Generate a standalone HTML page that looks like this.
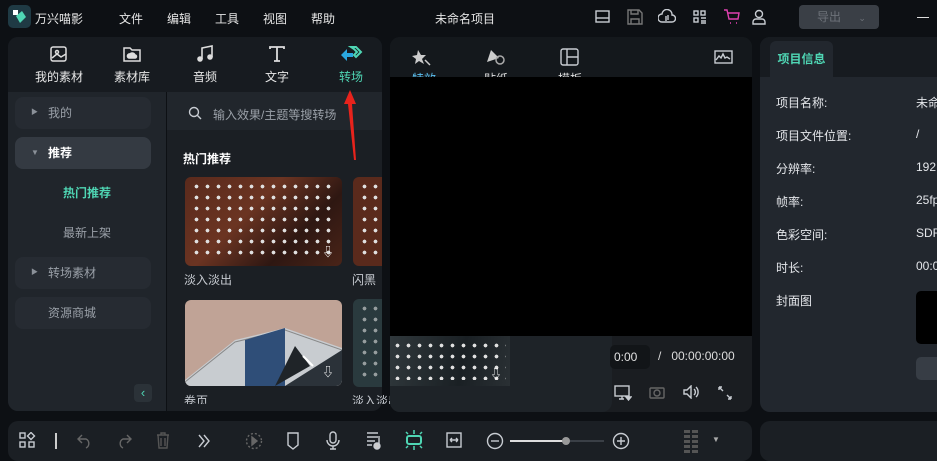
<!DOCTYPE html><html><head><meta charset="utf-8"><style>
*{margin:0;padding:0;box-sizing:border-box}
body{width:937px;height:454px;overflow:hidden;background:#0d1014;font-family:"Liberation Sans","Noto Sans CJK SC",sans-serif;color:#d8dbe0;position:relative;font-size:12px}
.a{position:absolute;white-space:nowrap}
.menu span{position:absolute;top:10px;font-size:12px;color:#e6e6e6}
.tab{position:absolute;top:44px;width:70px;text-align:center;font-size:12px;color:#e8e8e8}
.tab svg{display:block;margin:0 auto 4px}
.side{position:absolute;left:15px;width:136px;height:32px;border-radius:8px;background:#262b32;font-size:12px;color:#9aa0a8;line-height:32px;padding-left:33px}
.tri{position:absolute;left:16px;top:0;font-size:7px;color:#8a9098}
.thumb{position:absolute;border-radius:6px;overflow:hidden}
.dots{position:absolute;inset:4px 8px 10px 6px;background-image:linear-gradient(#d8d8d8,#d8d8d8),linear-gradient(#0000,#0000);background-image:radial-gradient(circle,#e0e0e0 0 1.7px,transparent 2px);background-size:11px 11px;background-position:0 0}
.lbl{position:absolute;font-size:12px;color:#c6cad0;white-space:nowrap}
.info{position:absolute;left:776px;font-size:12px;color:#e4e6ea;white-space:nowrap}
.val{position:absolute;left:916px;font-size:12px;color:#e4e6ea;white-space:nowrap}
.ic{position:absolute;stroke:#c8ccd2;fill:none;stroke-width:1.4}
</style></head><body>
<div class="a" style="left:8px;top:5px;width:23px;height:23px;border-radius:5px;background:#1f3a44"></div>
<svg class="a" style="left:11px;top:8px" width="17" height="17"><path d="M2 2l5 0 0 5-5 0z" fill="#fff"/><path d="M5 8l6-5 4 6-6 6z" fill="#4fd6b4"/></svg>
<div class="menu"><span style="left:35px">万兴喵影</span><span style="left:119px">文件</span><span style="left:167px">编辑</span><span style="left:215px">工具</span><span style="left:263px">视图</span><span style="left:311px">帮助</span><span style="left:435px">未命名项目</span></div>
<svg class="ic" style="left:595px;top:10px" width="16" height="14"><rect x="1" y="1" width="13" height="11"/><path d="M1 8h13"/></svg>
<svg class="ic" style="left:627px;top:9px;stroke:#777" width="16" height="16"><path d="M1 1h11l3 3v11H1z M4 1v4h7V1 M4 15v-5h8v5"/></svg>
<svg class="ic" style="left:658px;top:9px" width="18" height="16"><path d="M4 13a4 4 0 0 1 0-8 5 5 0 0 1 10 1 3.5 3.5 0 0 1 0 7z M8 7v5 M10 6v5"/></svg>
<svg class="ic" style="left:693px;top:10px" width="14" height="14"><rect x="1" y="1" width="4" height="4"/><rect x="8" y="1" width="4" height="4"/><rect x="1" y="8" width="4" height="4"/><path d="M8 8h5M8 11h5M8 13h5"/></svg>
<svg class="ic" style="left:723px;top:9px;stroke:#e040b0" width="18" height="16"><path d="M1 1h3l2 9h9l1-6H5 M7 14h1M13 14h1"/></svg>
<svg class="ic" style="left:752px;top:9px" width="14" height="16"><circle cx="7" cy="5" r="3.5"/><path d="M1 15v-2a3 3 0 0 1 3-3h6a3 3 0 0 1 3 3v2z"/></svg>
<div class="a" style="left:799px;top:5px;width:80px;height:24px;border-radius:4px;background:#3a3f46;color:#6d7279;font-size:12px;line-height:24px;padding-left:18px">导出 <span style="margin-left:14px;font-size:9px">⌄</span></div>
<div class="a" style="left:917px;top:17px;width:12px;height:1px;background:#ddd"></div>

<div class="a" style="left:8px;top:37px;width:374px;height:374px;border-radius:10px;background:#1b1f24;overflow:hidden">
<div class="a" style="left:0;top:0;width:374px;height:55px;background:#171b20"></div>
<div class="a" style="left:0;top:55px;width:158px;height:319px;background:#20252b"></div>
<div class="a" style="left:158px;top:55px;width:1px;height:319px;background:#0d1014"></div>
<div class="a" style="left:159px;top:55px;width:215px;height:38px;background:#21262c"></div>
</div>
<div class="tab" style="left:24px"><svg width="20" height="20" style="stroke:#ddd;fill:none;stroke-width:1.5"><rect x="2" y="3" width="15" height="14" rx="2"/><path d="M3 14l5-4 4 3 5-3"/><circle cx="8" cy="8" r="1.5"/></svg>我的素材</div>
<div class="tab" style="left:97px"><svg width="20" height="20" style="stroke:#ddd;fill:none;stroke-width:1.5"><path d="M2 4h6l2 2h8v11H2z"/><path d="M7 14a2 2 0 0 1 1-4 3 3 0 0 1 5 1 1.5 1.5 0 0 1 0 3z" fill="#ddd"/></svg>素材库</div>
<div class="tab" style="left:170px"><svg width="20" height="20" style="stroke:#ddd;fill:none;stroke-width:1.6"><path d="M7 15V4l10-2v11"/><circle cx="5" cy="15" r="2" fill="#ddd"/><circle cx="15" cy="13" r="2" fill="#ddd"/></svg>音频</div>
<div class="tab" style="left:242px"><svg width="20" height="20" style="stroke:#ddd;fill:none;stroke-width:1.8"><path d="M3 5V3h14v2M10 3v14M7 17h6"/></svg>文字</div>
<div class="tab" style="left:316px;color:#4fd6b4"><svg width="24" height="20"><path d="M2 11l6-6v4h6v4H8v4z" fill="#2aa8e0"/><path d="M12 3l5 0 5 5-5 5-2-2 3-3-3-3z" fill="none" stroke="#4fd6b4" stroke-width="2"/></svg>转场</div>

<div class="side" style="top:97px">我的<span class="tri">▶</span></div>
<div class="side" style="top:137px;background:#343a42;color:#fff;font-weight:bold">推荐<span class="tri" style="font-size:8px">▼</span></div>
<div class="a" style="left:63px;top:184px;color:#4fd6b4;font-weight:bold;font-size:12px">热门推荐</div>
<div class="a" style="left:63px;top:224px;color:#9aa0a8;font-size:12px">最新上架</div>
<div class="side" style="top:257px">转场素材<span class="tri">▶</span></div>
<div class="side" style="top:297px">资源商城</div>
<div class="a" style="left:134px;top:384px;width:18px;height:18px;border-radius:4px;background:#2b3238;color:#4fd6b4;font-size:13px;text-align:center;line-height:17px">‹</div>

<svg class="ic" style="left:188px;top:106px" width="14" height="14"><circle cx="6" cy="6" r="4.5"/><path d="M9.5 9.5L13 13"/></svg>
<div class="a" style="left:213px;top:106px;color:#9aa0a8;font-size:12px">输入效果/主题等搜转场</div>
<div class="a" style="left:183px;top:150px;color:#fff;font-weight:bold;font-size:12px">热门推荐</div>

<div class="thumb" style="left:185px;top:177px;width:157px;height:89px;background:linear-gradient(135deg,#5a2a1c,#6b3422 40%,#2e1712 70%,#4a2418)"><div class="dots"></div><span class="a" style="right:8px;bottom:6px;color:#fff;font-size:12px">⇩</span></div>
<div class="lbl" style="left:184px;top:271px">淡入淡出</div>
<div class="thumb" style="left:353px;top:177px;width:29px;height:89px;border-radius:6px 0 0 6px;background:#5a2a1c"><div class="dots" style="right:0"></div></div>
<div class="lbl" style="left:352px;top:271px">闪黑</div>

<div class="thumb" style="left:185px;top:300px;width:157px;height:86px;background:#c0a396"><svg class="a" style="left:0;top:0" width="157" height="86"><path d="M0 80L50 40 100 28 157 48V86H0z" fill="#c8ccd0"/><path d="M0 82L50 42 100 30 157 50" stroke="#888" stroke-width="1" fill="none"/><path d="M60 40l40-12v58H60z" fill="#2f4e78"/><path d="M100 86L157 50V86z" fill="#2b3239"/><path d="M90 86l20-40 15 20z" fill="#1f2428"/><path d="M118 56l10 10" stroke="#fff" stroke-width="2"/></svg><span class="a" style="right:8px;bottom:6px;color:#fff;font-size:12px">⇩</span></div>
<div class="lbl" style="left:184px;top:392px;height:12px;overflow:hidden">卷页</div>
<div class="thumb" style="left:353px;top:299px;width:29px;height:88px;border-radius:6px 0 0 6px;background:#2a3a3e"><div class="dots" style="opacity:.6;right:0"></div></div>
<div class="lbl" style="left:352px;top:392px;height:12px;overflow:hidden">淡入淡出（灰）</div>

<div class="a" style="left:390px;top:37px;width:362px;height:375px;border-radius:10px;background:#1a1d21;overflow:hidden">
<div class="a" style="left:0;top:0;width:362px;height:40px;background:#14181c"></div>
<div class="a" style="left:0;top:40px;width:362px;height:259px;background:#000"></div>
<div class="a" style="left:0;top:299px;width:222px;height:76px;background:#1e2328;border-radius:0 0 10px 0"></div>
</div>
<svg class="a" style="left:410px;top:46px" width="26" height="20"><path d="M8 4l3 5 5 0-4 4 2 5-5-3-4 3 1-5-4-3 5-1z" fill="#ccc"/><path d="M15 14l5 5" stroke="#ccc" stroke-width="1.5"/></svg>
<svg class="a" style="left:485px;top:46px" width="22" height="20"><path d="M2 16l4-12 8 8z" fill="#ccc"/><circle cx="15" cy="14" r="4" fill="none" stroke="#aaa" stroke-width="1.5"/></svg>
<svg class="ic" style="left:560px;top:48px" width="20" height="18"><rect x="1" y="1" width="17" height="16" rx="2"/><path d="M7 1v16M7 9h11"/></svg>
<svg class="ic" style="left:714px;top:50px" width="20" height="14"><rect x="1" y="1" width="17" height="12"/><path d="M2 10l3-4 2 2 2-4 2 4 2-1 3 2"/></svg>
<div class="a" style="left:412px;top:70px;width:180px;height:7px;overflow:hidden;font-size:12px;color:#5bc0f0"><span style="position:absolute;top:0">特效</span><span style="position:absolute;left:72px;top:0;color:#ddd">贴纸</span><span style="position:absolute;left:146px;top:0;color:#ddd">模板</span></div>
<div class="a" style="left:610px;top:345px;width:40px;height:24px;background:#121518;border-radius:5px;color:#e0e0e0;font-size:12px;line-height:24px;padding-left:4px">0:00</div>
<div class="a" style="left:658px;top:349px;color:#ddd;font-size:12px">/&nbsp;&nbsp;&nbsp;00:00:00:00</div>
<svg class="ic" style="left:614px;top:385px" width="18" height="16"><rect x="1" y="1" width="14" height="10"/><path d="M8 11v3M5 14h5"/><path d="M12 12h5l-2.5 3z" fill="#ccc"/></svg>
<svg class="ic" style="left:649px;top:385px;stroke:#666" width="16" height="14"><rect x="1" y="3" width="14" height="10" rx="1"/><circle cx="8" cy="8" r="3"/></svg>
<svg class="ic" style="left:683px;top:385px" width="16" height="14"><path d="M1 5h3l4-4v12l-4-4H1z M11 4a4 4 0 0 1 0 6M13 2a7 7 0 0 1 0 10"/></svg>
<svg class="ic" style="left:718px;top:386px" width="14" height="14"><path d="M1 1l4 4M1 1v3M1 1h3M13 13l-4-4M13 13v-3M13 13h-3"/></svg>
<div class="a" style="left:390px;top:336px;width:120px;height:50px;background:linear-gradient(100deg,#30383c,#1a2024 60%,#2a3034);overflow:hidden"><div class="dots" style="inset:4px 4px 6px 2px"></div><span class="a" style="right:8px;bottom:4px;color:#fff;font-size:12px">⇩</span></div>
<svg class="a" style="left:340px;top:88px" width="20" height="75"><path d="M10 2l-6 14h4l6 56 2 0-4-56h4z" fill="#e8231c"/></svg>

<div class="a" style="left:760px;top:37px;width:177px;height:375px;border-radius:10px 0 0 10px;background:#22272e"></div>
<div class="a" style="left:760px;top:37px;width:177px;height:40px;background:#171b20;border-radius:10px 0 0 0"></div>
<div class="a" style="left:770px;top:41px;width:63px;height:36px;background:#22272e;border-radius:6px 6px 0 0;color:#4fd6b4;font-weight:bold;font-size:12px;line-height:36px;text-align:center">项目信息</div>
<div class="info" style="top:94px">项目名称:</div><div class="val" style="top:94px">未命</div>
<div class="info" style="top:127px">项目文件位置:</div><div class="val" style="top:127px">/</div>
<div class="info" style="top:160px">分辨率:</div><div class="val" style="top:160px">192</div>
<div class="info" style="top:193px">帧率:</div><div class="val" style="top:193px">25fp</div>
<div class="info" style="top:226px">色彩空间:</div><div class="val" style="top:226px">SDR</div>
<div class="info" style="top:259px">时长:</div><div class="val" style="top:259px">00:0</div>
<div class="info" style="top:292px">封面图</div>
<div class="a" style="left:916px;top:291px;width:21px;height:53px;background:#000;border-radius:5px 0 0 5px"></div>
<div class="a" style="left:916px;top:357px;width:21px;height:23px;background:#373d45;border-radius:5px 0 0 5px"></div>

<div class="a" style="left:8px;top:421px;width:744px;height:40px;border-radius:10px;background:#1b1f24"></div>
<svg class="ic" style="left:19px;top:432px" width="18" height="18"><rect x="1" y="1" width="5" height="5"/><path d="M12 0.5l3.5 3.5-3.5 3.5-3.5-3.5z"/><rect x="1" y="10" width="5" height="5"/><rect x="10" y="10" width="5" height="5"/></svg>
<div class="a" style="left:55px;top:433px;width:1.5px;height:16px;background:#ccc"></div>
<svg class="ic" style="left:77px;top:433px;stroke:#666" width="16" height="16"><path d="M5 2L1 6l4 4M1 6h8a5 5 0 0 1 0 9"/></svg>
<svg class="ic" style="left:116px;top:433px;stroke:#666" width="16" height="16"><path d="M11 2l4 4-4 4M15 6H7a5 5 0 0 0 0 9"/></svg>
<svg class="ic" style="left:156px;top:432px;stroke:#555" width="14" height="17"><path d="M1 3h12M5 3V1h4v2M2 3l1 13h8l1-13M5 6v8M9 6v8"/></svg>
<svg class="ic" style="left:197px;top:433px" width="14" height="16"><path d="M2 2l5 6-5 6M7 2l5 6-5 6"/></svg>
<svg class="ic" style="left:245px;top:432px;stroke:#666" width="18" height="18"><circle cx="9" cy="9" r="7.5" stroke-dasharray="2 2"/><path d="M7 5l5 4-5 4z" fill="#666"/></svg>
<svg class="ic" style="left:286px;top:432px" width="14" height="18"><path d="M2 1h10v12l-5 4-5-4z"/></svg>
<svg class="ic" style="left:326px;top:431px" width="14" height="19"><rect x="4" y="1" width="6" height="11" rx="3"/><path d="M1 9a6 6 0 0 0 12 0M7 15v3M4 18h6"/></svg>
<svg class="ic" style="left:366px;top:431px" width="16" height="19"><path d="M1 2h11M1 6h11M1 10h8M1 14h5"/><circle cx="11" cy="15" r="3" fill="#ccc"/><path d="M13 15V5"/></svg>
<svg class="a" style="left:403px;top:429px" width="22" height="22"><rect x="4" y="7" width="14" height="8" rx="2" fill="none" stroke="#4fd6b4" stroke-width="2"/><path d="M11 1v4M11 17v4M3 3l2 2M19 3l-2 2M3 19l2-2M19 19l-2-2" stroke="#4fd6b4" stroke-width="1.5"/></svg>
<svg class="ic" style="left:446px;top:432px" width="16" height="16"><rect x="1" y="1" width="14" height="14"/><path d="M4 8h8M4 8l2-2M4 8l2 2M12 8l-2-2M12 8l-2 2"/></svg>
<svg class="ic" style="left:486px;top:432px" width="18" height="18"><circle cx="9" cy="9" r="7.5"/><path d="M5 9h8"/></svg>
<div class="a" style="left:510px;top:440px;width:56px;height:2px;background:#ddd"></div>
<div class="a" style="left:566px;top:440px;width:38px;height:2px;background:#3a3f46"></div>
<div class="a" style="left:562px;top:437px;width:8px;height:8px;border-radius:50%;background:#999"></div>
<svg class="ic" style="left:612px;top:432px" width="18" height="18"><circle cx="9" cy="9" r="7.5"/><path d="M5 9h8M9 5v8"/></svg>
<svg class="a" style="left:684px;top:430px" width="16" height="24" fill="#555"><rect x="0" y="0" width="6" height="3"/><rect x="8" y="0" width="6" height="3"/><rect x="0" y="5" width="6" height="3"/><rect x="8" y="5" width="6" height="3"/><rect x="0" y="10" width="6" height="3"/><rect x="8" y="10" width="6" height="3"/><rect x="0" y="15" width="6" height="3"/><rect x="8" y="15" width="6" height="3"/><rect x="0" y="20" width="6" height="3"/><rect x="8" y="20" width="6" height="3"/></svg>
<div class="a" style="left:712px;top:435px;font-size:8px;color:#aaa">▼</div>
<div class="a" style="left:760px;top:421px;width:177px;height:40px;border-radius:10px 0 0 10px;background:#1b1f24"></div>
</body></html>
